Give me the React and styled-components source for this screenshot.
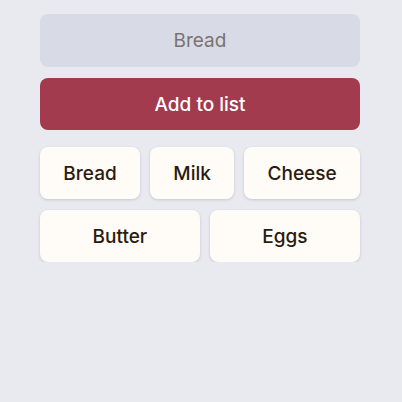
import React, { useState } from "react";
import styled, { createGlobalStyle } from "styled-components";

const GlobalStyle = createGlobalStyle`
    body {
        margin: 0;
        background: #e9eaf0;
        font-family: Inter, "Noto Sans", sans-serif;
    }
`;

const Page = styled.main`
    width: 320px;
    padding: 14px 0 0 40px;
    display: flex;
    flex-direction: column;
`;

const Input = styled.input`
    height: 53px;
    border: none;
    border-radius: 8px;
    background: #d8dbe6;
    color: #7a7370;
    font: inherit;
    font-size: 19px;
    text-align: center;
    outline: none;
    padding: 0;

    &::placeholder {
        color: #7a7370;
    }
`;

const AddButton = styled.button`
    margin-top: 11px;
    height: 52px;
    border: none;
    border-radius: 8px;
    background: #a23b4d;
    color: #fff;
    font: inherit;
    font-size: 19px;
    font-weight: 500;
    cursor: pointer;
`;

const List = styled.ul`
    list-style: none;
    margin: 17px 0 0;
    padding: 0;
    display: flex;
    flex-wrap: wrap;
    gap: 11px 10px;
`;

const Item = styled.li`
    flex: 1 1 auto;
    height: 52px;
    padding: 0 16px;
    display: flex;
    align-items: center;
    justify-content: center;
    background: #fffbf6;
    border-radius: 8px;
    box-shadow: 0 1px 3px rgba(40, 30, 50, 0.18);
    color: #2b1a0f;
    font-size: 19px;
    font-weight: 500;
`;

export default function App() {
    const [value, setValue] = useState("");
    const [items, setItems] = useState(["Bread", "Milk", "Cheese", "Butter", "Eggs"]);

    return (
        <>
            <GlobalStyle />
            <Page>
                <Input
                    value={value}
                    onChange={e => setValue(e.target.value)}
                    placeholder="Bread"
                />
                <AddButton onClick={() => value && setItems([...items, value])}>
                    Add to list
                </AddButton>
                <List>
                    {items.map((item, i) => (
                        <Item key={i}>{item}</Item>
                    ))}
                </List>
            </Page>
        </>
    );
}
